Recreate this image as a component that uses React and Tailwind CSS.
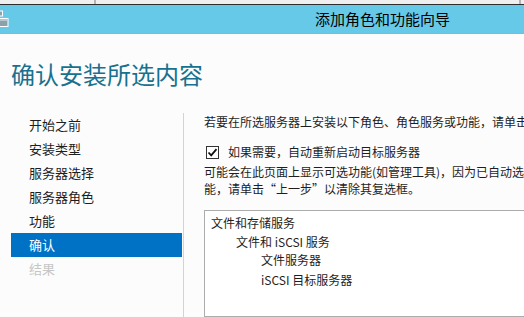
export default function App() {
  const font = { fontFamily: '"Noto Sans CJK SC", "Noto Sans", sans-serif' };
  const items = ["开始之前", "安装类型", "服务器选择", "服务器角色", "功能", "确认", "结果"];
  return (
    <div
      className="w-[524px] h-[317px] overflow-hidden bg-[#fcfcfc] text-[#1e1e1e] flex flex-col"
      style={font}
    >
      {/* top strip */}
      <div className="h-[4px] bg-[#efefef] flex shrink-0">
        <div className="w-[94px]" />
        <div className="w-[2px] bg-[#b4b4b4]" />
        <div className="flex-1" />
        <div className="w-[2px] bg-[#b4b4b4] mr-[3px]" />
      </div>
      <div className="h-[1px] bg-[#2d2d2d] shrink-0" />
      {/* blue title bar */}
      <div className="h-[28px] bg-[#67c9e8] flex items-center shrink-0 relative">
        <svg className="absolute left-0 top-[5px]" width="10" height="18" viewBox="0 0 10 18">
          <rect x="-1" y="1" width="3.5" height="5" fill="#8fa3ae" stroke="#fff" strokeWidth="1" />
          <rect x="-1" y="8.5" width="9" height="8" fill="#8aa0ab" stroke="#fff" strokeWidth="1" />
          <rect x="0" y="9" width="7" height="2" fill="#b7c6cd" />
        </svg>
        <div className="pl-[315px] text-[15px] leading-[18px] text-black whitespace-nowrap">
          添加角色和功能向导
        </div>
      </div>
      <div className="h-[1px] bg-[#82b9cf] shrink-0" />
      {/* page title */}
      <div className="mt-[27px] pl-[11px] text-[24px] leading-[26px] text-[#17718f] whitespace-nowrap shrink-0">
        确认安装所选内容
      </div>
      {/* body */}
      <div className="mt-[24px] flex flex-1 min-h-0">
        <div className="w-[184px] shrink-0 mt-[2px] border-r border-[#d3d3d3] pl-[11px] pr-[1px] flex flex-col">
          {items.map((t, i) => (
            <div
              key={t}
              className={
                "h-[24px] flex items-center pl-[18px] text-[13px] whitespace-nowrap " +
                (i === 5
                  ? "bg-[#0072c6] text-white"
                  : i === 6
                  ? "text-[#c6c6c6]"
                  : "text-[#1e1e1e]")
              }
            >
              {t}
            </div>
          ))}
        </div>
        <div className="pl-[20px] pt-[2px] flex flex-col text-[12px] whitespace-nowrap">
          <div className="leading-[18px]">若要在所选服务器上安装以下角色、角色服务或功能，请单击</div>
          <div className="mt-[12px] h-[18px] flex items-center">
            <div className="ml-[2px] w-[13px] h-[13px] border border-[#333] bg-white flex items-center justify-center">
              <svg width="11" height="11" viewBox="0 0 11 11">
                <path d="M1.5 5.5 L4.2 8.3 L9.5 2.2" fill="none" stroke="#111" strokeWidth="1.8" />
              </svg>
            </div>
            <div className="ml-[9px] leading-[18px]">如果需要，自动重新启动目标服务器</div>
          </div>
          <div className="mt-[2px] leading-[17px]">可能会在此页面上显示可选功能(如管理工具)，因为已自动选</div>
          <div className="leading-[17px]">能，请单击“上一步”以清除其复选框。</div>
          <div className="mt-[13px] w-[340px] h-[200px] border border-[#acacac] bg-white flex flex-col pt-[2px]">
            <div className="h-[20px] leading-[20px] pl-[6px]">文件和存储服务</div>
            <div className="h-[18px] leading-[18px] pl-[31px]">文件和 iSCSI 服务</div>
            <div className="h-[18px] leading-[18px] pl-[56px]">文件服务器</div>
            <div className="mt-[2px] h-[18px] leading-[18px] pl-[56px]">iSCSI 目标服务器</div>
          </div>
        </div>
      </div>
    </div>
  );
}
